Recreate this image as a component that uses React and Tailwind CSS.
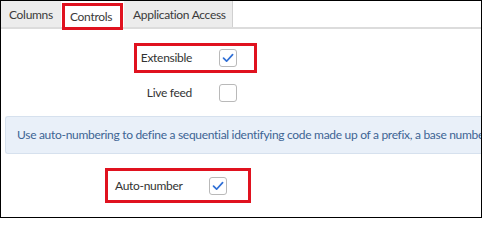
import React from 'react';

const Checkbox = ({ checked }) => (
  <div className="flex h-[18px] w-[18px] shrink-0 items-center justify-center rounded-[3px] border border-[#b9b9b9] bg-white">
    {checked && (
      <svg width="12" height="10" viewBox="0 0 12 10" fill="none">
        <path d="M1.5 5.2 L4.6 8.2 L10.6 1.6" stroke="#2f6fd6" strokeWidth="1.7" strokeLinecap="round" strokeLinejoin="round" />
      </svg>
    )}
  </div>
);

const App = () => {
  return (
    <div className="h-[218px] w-[482px] overflow-hidden border border-black bg-white font-['Lato',sans-serif] text-[12px] tracking-[-0.3px] text-[#333]">
      <div className="flex h-[28px] items-stretch whitespace-nowrap border-b-2 border-[#dcdcdc] text-[#3a3a3a]">
        <div className="flex w-[60px] items-center bg-[#ececec] pl-[8px] pt-[1px]">Columns</div>
        <div className="relative z-10 ml-[1px] mt-[2px] -mb-[3px] flex w-[61px] items-center border-[3px] border-[#e0121f] bg-white pl-[5px]">
          Controls
        </div>
        <div className="ml-[1px] flex w-[109px] items-center border-r border-[#d0d0d0] bg-[#ececec] pl-[9px] pt-[1px]">
          Application Access
        </div>
      </div>

      <div className="ml-[133px] mt-[14px] flex h-[30px] w-[123px] items-center border-[3px] border-[#e0121f]">
        <span className="w-[55px] text-right">Extensible</span>
        <div className="ml-[27px]">
          <Checkbox checked />
        </div>
      </div>

      <div className="ml-[136px] mt-[11px] flex h-[18px] items-center">
        <span className="w-[55px] text-right">Live feed</span>
        <div className="ml-[27px]">
          <Checkbox />
        </div>
      </div>

      <div className="ml-[4px] mt-[14px] flex h-[38px] items-center whitespace-nowrap rounded-l-[3px] border border-r-0 border-[#d6e1ee] bg-[#e9f0f9] pl-[11px] text-[#3d6494]">
        Use auto-numbering to define a sequential identifying code made up of a prefix, a base number, and a suffix.
      </div>

      <div className="ml-[104px] mt-[14px] flex h-[35px] w-[146px] items-center border-[3px] border-[#e0121f] pl-[7px]">
        <span className="w-[94px]">Auto-number</span>
        <Checkbox checked />
      </div>
    </div>
  );
};

export default App;
